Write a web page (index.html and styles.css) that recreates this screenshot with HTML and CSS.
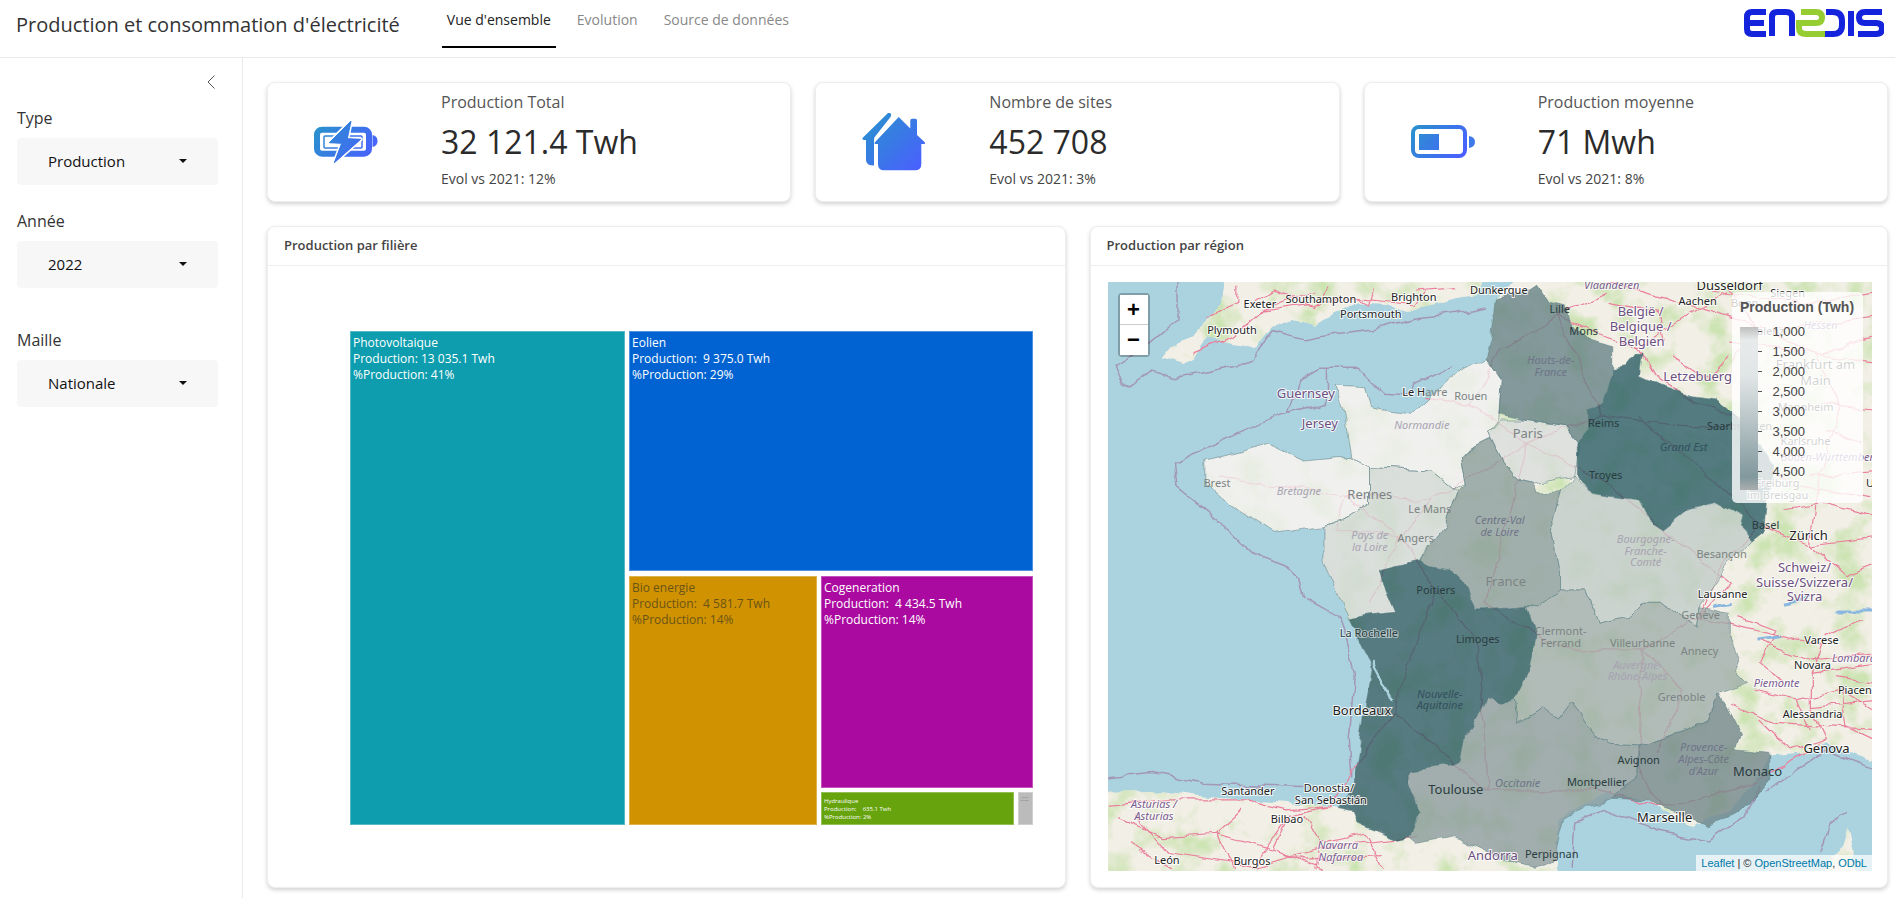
FILE: index.html
```html
<!DOCTYPE html>
<html lang="fr">
<head>
<meta charset="utf-8">
<title>Production et consommation d'électricité</title>
<link rel="stylesheet" href="styles.css">
</head>
<body>
<header class="topbar">
  <div class="app-title">Production et consommation d'électricité</div>
  <nav class="tabs">
    <a class="tab tab-active">Vue d'ensemble</a>
    <a class="tab">Evolution</a>
    <a class="tab">Source de données</a>
  </nav>
  <svg class="logo" width="140" height="30" viewBox="0 0 140 30" role="img" aria-label="Enedis logo">
    <g fill="none" stroke="#1423dc" stroke-width="6" stroke-linejoin="round">
      <path d="M22 4 H8 Q3 4 3 9 V21 Q3 26 8 26 H22 M3 15 H20"/>
      <path d="M28 28 V9 Q28 4 33 4 H42 Q48 4 48 9 V28"/>
      <path d="M81 26 H89 Q98 26 98 17 V13 Q98 4 89 4 H82"/>
      <path d="M107 3 V28"/>
      <path d="M138 4 H121 Q115 4 115 9.500 Q115 15 121 15 H132 Q138 15 138 20.500 Q138 26 132 26 H114"/>
    </g>
    <path d="M57 4 H72 Q78 4 78 9.500 Q78 15 72 15 H55 V20 Q55 26 62 26 H81" fill="none" stroke="#96cd32" stroke-width="6"/>
  </svg>
</header>
<div class="shell">
  <aside class="sidebar">
    <div class="collapse">
      <svg width="8" height="14" viewBox="0 0 8 14"><path d="M7.500 .5 L1 7 L7.500 13.500" fill="none" stroke="#555" stroke-width="1"/></svg>
    </div>
    <div class="filter filter-first">
      <div class="filter-label">Type</div>
      <div class="select"><span>Production</span><i class="caret"></i></div>
    </div>
    <div class="filter">
      <div class="filter-label">Année</div>
      <div class="select"><span>2022</span><i class="caret"></i></div>
    </div>
    <div class="filter filter-spaced">
      <div class="filter-label">Maille</div>
      <div class="select"><span>Nationale</span><i class="caret"></i></div>
    </div>
  </aside>
  <main class="main">
    <section class="kpis">
      <article class="card kpi">
        <div class="kpi-icon">
          <svg width="64" height="44" viewBox="0 0 64 44">
            <defs><linearGradient id="g1" gradientUnits="userSpaceOnUse" x1="8" y1="4" x2="56" y2="42"><stop offset="0" stop-color="#2a90cf"/><stop offset="1" stop-color="#4a5fff"/></linearGradient></defs>
            <rect x="3" y="9.700" width="52" height="24" rx="5" fill="none" stroke="url(#g1)" stroke-width="6"/>
            <rect x="10" y="16" width="38" height="12" rx="1" fill="none" stroke="url(#g1)" stroke-width="1.500"/>
            <path d="M58.500 15 Q63.500 16 63.500 21 Q63.500 26 58.500 27 Z" fill="url(#g1)"/>
            <path d="M37 1 L15.300 22.700 L27.700 23.300 L20.300 42.700 L46.700 19.300 L33.300 18.700 Z" fill="url(#g1)" stroke="#fff" stroke-width="4" stroke-linejoin="round" paint-order="stroke"/>
            <path d="M37 1 L15.300 22.700 L27.700 23.300 L20.300 42.700 L46.700 19.300 L33.300 18.700 Z" fill="url(#g1)" stroke="url(#g1)" stroke-width="1" stroke-linejoin="round"/>
          </svg>
        </div>
        <div class="kpi-text">
          <div class="kpi-label">Production Total</div>
          <div class="kpi-value">32 121.4 Twh</div>
          <div class="kpi-evol">Evol vs 2021: 12%</div>
        </div>
      </article>
      <article class="card kpi">
        <div class="kpi-icon">
          <svg width="64" height="60" viewBox="0 0 64 60">
            <defs><linearGradient id="g2" gradientUnits="userSpaceOnUse" x1="6" y1="6" x2="58" y2="58"><stop offset="0" stop-color="#2a90cf"/><stop offset="1" stop-color="#4a5fff"/></linearGradient></defs>
            <path d="M26 1 L.5 26 Q0 28 2 28 H4 V48 Q4 53.500 12 53.500 V28 Q12 25 13.500 24 L28.500 5 Q30 2.500 28 1 Z" fill="url(#g2)"/>
            <path d="M36.700 5 L48.300 16.500 V8.500 Q48.300 6.700 50 6.700 H53.500 Q55 6.700 55 8.500 V23 L63 30.500 Q63.500 32 62 32 H59.300 V52 Q59.300 58.300 53 58.300 H22 Q16 58.300 16 52 V32 H13.500 Q12 32 12.700 30.500 Z" fill="url(#g2)"/>
          </svg>
        </div>
        <div class="kpi-text">
          <div class="kpi-label">Nombre de sites</div>
          <div class="kpi-value">452 708</div>
          <div class="kpi-evol">Evol vs 2021: 3%</div>
        </div>
      </article>
      <article class="card kpi">
        <div class="kpi-icon">
          <svg width="64" height="34" viewBox="0 0 64 34">
            <defs><linearGradient id="g3" gradientUnits="userSpaceOnUse" x1="6" y1="0" x2="50" y2="34"><stop offset="0" stop-color="#2a90cf"/><stop offset="1" stop-color="#4a5fff"/></linearGradient></defs>
            <rect x="2" y="2" width="52" height="29" rx="6" fill="none" stroke="url(#g3)" stroke-width="4"/>
            <rect x="8" y="9" width="20" height="16" fill="url(#g3)"/>
            <path d="M58 11 Q64 12 64 17 Q64 22 58 23 Z" fill="#3f78e8"/>
          </svg>
        </div>
        <div class="kpi-text">
          <div class="kpi-label">Production moyenne</div>
          <div class="kpi-value">71 Mwh</div>
          <div class="kpi-evol">Evol vs 2021: 8%</div>
        </div>
      </article>
    </section>
    <section class="panels">
      <article class="card panel">
        <h2 class="panel-head">Production par filière</h2>
        <div class="treemap-body">
          <div class="treemap">
            <div class="tile tile-pv">Photovoltaique<br>Production: 13 035.1 Twh<br>%Production: 41%</div>
            <div class="tm-col">
              <div class="tile tile-eol">Eolien<br>Production:  9 375.0 Twh<br>%Production: 29%</div>
              <div class="tm-row">
                <div class="tile tile-bio">Bio energie<br>Production:  4 581.7 Twh<br>%Production: 14%</div>
                <div class="tm-sub">
                  <div class="tile tile-cog">Cogeneration<br>Production:  4 434.5 Twh<br>%Production: 14%</div>
                  <div class="tm-foot">
                    <div class="tile tile-hyd">Hydraulique<br>Production:    635.1 Twh<br>%Production: 2%</div>
                    <div class="tile tile-oth">Autres<br>60 Twh</div>
                  </div>
                </div>
              </div>
            </div>
          </div>
        </div>
      </article>
      <article class="card panel">
        <h2 class="panel-head">Production par région</h2>
        <div class="map-body">
          <div class="map">
            <svg class="map-svg" viewBox="1107 282 765 589" preserveAspectRatio="none">
              <defs>
                <filter id="landfx" filterUnits="userSpaceOnUse" x="1087" y="262" width="805" height="629" color-interpolation-filters="sRGB">
                  <feTurbulence type="fractalNoise" baseFrequency="0.04" numOctaves="3" seed="3" result="n"/>
                  <feDisplacementMap in="SourceGraphic" in2="n" scale="10" xChannelSelector="R" yChannelSelector="G" result="d"/>
                  <feTurbulence type="fractalNoise" baseFrequency="0.03" numOctaves="4" seed="7"/>
                  <feColorMatrix type="matrix" values="0 0 0 0 .8  0 0 0 0 .89  0 0 0 0 .7  2.500 2.500 0 0 -2.400" result="gc"/>
                  <feComposite in="gc" in2="d" operator="in" result="gi"/>
                  <feMerge><feMergeNode in="d"/><feMergeNode in="gi"/></feMerge>
                </filter>
                <filter id="rough" filterUnits="userSpaceOnUse" x="1087" y="262" width="805" height="629" color-interpolation-filters="sRGB">
                  <feTurbulence type="fractalNoise" baseFrequency="0.04" numOctaves="3" seed="3" result="n"/>
                  <feDisplacementMap in="SourceGraphic" in2="n" scale="10" xChannelSelector="R" yChannelSelector="G"/>
                </filter>
              </defs>
              <rect class="sea" x="1107" y="282" width="765" height="589"/>
              <g filter="url(#landfx)">
                <g class="land" transform="translate(1100 270) scale(.507 .3333)">
                  <path d="M250 -30 L770 -30 L745 75 L700 85 L640 110 L600 125 L560 105 L510 100 L470 130 L420 165 L380 150 L340 170 L305 235 L280 225 L210 205 L180 270 L165 285 L130 270 L120 265 L135 235 L180 200 L215 140 L240 80 Z"/>
                  <path d="M860 -30 L1700 -30 L1700 1500 L1523 1470 L1430 1420 L1390 1450 L1320 1460 L1290 1540 L1240 1620 L1170 1670 L1110 1630 L1080 1590 L1000 1570 L950 1610 L905 1650 L895 1900 L-100 1900 L-100 1565 L100 1560 L200 1580 L290 1590 L370 1600 L470 1610 L500 1550 L520 1330 L535 1200 L490 1050 L440 870 L440 770 L340 790 L250 700 L205 640 L205 570 L330 520 L400 570 L470 560 L495 560 L480 420 L460 345 L520 350 L530 410 L610 430 L650 390 L690 320 L760 265 L770 210 L780 90 Z"/>
                  <path d="M1475 1670 L1485 1740 L1490 1900 L1410 1900 L1440 1760 L1465 1730 Z"/>
                </g>
              </g>
              <g filter="url(#rough)">
                <g transform="translate(1100 270) scale(.507 .3333)">
                  <path class="maritime" d="M150 36 L150 150 L100 215 L30 285 Q40 350 60 350 L100 300 L140 325 L220 300 L300 270 L340 185 L400 210 L470 190 L560 170 L620 145 L700 130 L760 110 M390 330 L430 295 L510 295 L560 370 L610 375 L620 340 L690 290 M390 330 L370 430 L445 400 L445 295 M370 430 L350 440 L270 490 L145 580 L150 650 L230 750 L300 850 L360 885 L390 930 L400 980 L470 1040 L500 1210 L490 1410 L495 1520 M-20 1525 L100 1508 L200 1540 L310 1545 L400 1550 M930 1790 L935 1660 L990 1615 L1100 1680 L1200 1710 L1270 1640 L1300 1550 M1310 1565 L1430 1440 L1560 1510 M1470 1630 L1440 1660 L1420 1750"/>
                  <path class="road" d="M180 250 L260 200 L315 125 L380 110 L505 85 L620 105 M315 125 L420 60 M505 85 L530 105 L540 50 M620 105 L640 60 M905 140 L960 180 L1060 230 L1180 115 L1240 60 M905 140 L1000 70 M905 140 L990 435 L1150 470 L1290 470 M1060 230 L1100 330 L1180 400 L1290 470 M1180 115 L1320 180 L1410 255 L1460 410 L1420 610 L1400 825 M1320 180 L1540 140 M1410 255 L1540 200 M1060 440 L1200 620 L1300 760 L1400 825 L1540 800 M1300 760 L1220 900 L1180 1040 M1400 825 L1470 920 L1540 880 M840 520 L729 400 L640 385 M729 400 L785 240 L905 140 M840 520 L990 435 M840 520 L1000 640 L1100 770 L1170 850 L1240 940 L1180 1040 L1070 1140 L910 1140 L760 1000 L840 520 M840 520 L650 690 L480 675 L230 620 M480 675 L590 800 L650 690 M590 800 L660 960 L745 1130 L760 1560 M660 960 L575 1325 L760 1560 L980 1560 L1110 1615 L1300 1540 M1070 1140 L1060 1490 L1110 1615 M1070 1140 L1150 1260 L1100 1450 M480 675 L460 780 L590 800 L530 1000 M575 1325 L450 1610 L365 1620 L290 1590 M1180 1040 L1420 1130 L1400 1210 L1400 1310 L1430 1410 M1400 1210 L1540 1180 M1400 1310 L1540 1290 M1430 1410 L1298 1530 M-20 1610 L130 1590 L290 1590 M130 1750 L300 1790 L370 1640 L450 1610 M130 1750 L70 1640 M300 1790 L480 1720 L620 1700 M370 1640 L340 1740 L440 1802 M230 1690 L400 1770 L560 1760 M1540 1380 L1330 1360 L1240 1300 M1450 1220 L1540 1240 M1290 1110 L1400 1170 L1540 1150 M1240 210 L1540 280 M1200 60 L1400 100 L1540 60 M1000 40 L1180 115 M1420 400 L1540 420 M1400 620 L1540 600 M30 1640 L120 1700 L230 1690 L280 1620 M60 1720 L140 1800 M230 1690 L260 1800 M400 1640 L430 1720 L520 1690 M430 1720 L420 1800 M520 1690 L560 1802 M1290 1260 L1370 1290 L1460 1260 L1540 1330 M1370 1290 L1400 1380 M1300 1350 L1360 1440 L1430 1410 M1460 1260 L1470 1370 L1540 1420 M1260 1040 L1330 1080 L1300 1180 L1350 1240 M1430 1100 L1500 1050 M1240 50 L1290 160 L1250 280 M1130 260 L1200 330 L1240 260 M1000 100 L1100 130 L1110 220 M1290 560 L1360 640 L1520 680 M1430 480 L1500 520 M1340 720 L1430 700 L1530 740 M300 100 L340 60 L420 110 L450 50 M210 140 L270 100 L270 50 M620 60 L700 50"/>
                </g>
              </g>
              <g filter="url(#rough)">
                <g transform="translate(1100 270) scale(.507 .3333)" class="regions">
                  <path fill="#f0f0ef" d="M205 570 L330 520 L400 570 L470 560 L495 560 L530 590 L530 700 L490 740 L440 770 L340 790 L250 700 L205 640 Z"/>
                  <path fill="#f0f0ef" d="M460 345 L520 350 L530 410 L610 430 L650 390 L690 320 L760 265 L790 330 L785 450 L765 490 L770 510 L705 560 L715 650 L690 650 L650 600 L530 590 L495 560 L480 420 Z"/>
                  <path fill="#d3dad9" d="M530 590 L650 600 L690 650 L705 660 L680 770 L635 850 L630 870 L550 900 L560 960 L580 1030 L520 1040 L490 1050 L440 870 L440 770 L490 740 L530 700 Z"/>
                  <path fill="#d8dcdb" d="M765 490 L790 450 L830 450 L920 470 L945 520 L935 620 L905 625 L855 640 L820 630 L790 570 L770 510 Z"/>
                  <path fill="#648085" d="M860 40 L840 60 L780 90 L770 210 L760 265 L790 330 L785 430 L830 450 L920 470 L945 520 L960 480 L960 420 L990 400 L1010 295 L1010 230 L960 210 L930 170 L920 110 L885 100 Z"/>
                  <path fill="#265a63" d="M1060 250 L1040 290 L1010 295 L990 400 L960 420 L960 480 L940 530 L940 620 L965 670 L1060 690 L1080 750 L1110 780 L1160 720 L1215 700 L1265 740 L1260 770 L1285 810 L1310 780 L1315 700 L1330 590 L1310 540 L1250 440 L1210 390 L1170 380 L1110 350 L1065 320 L1070 250 Z"/>
                  <path fill="#8a9c9b" d="M770 510 L790 570 L820 630 L855 640 L860 670 L905 665 L890 760 L905 900 L905 960 L860 1010 L840 1010 L760 1020 L740 1020 L710 930 L690 900 L650 890 L630 870 L635 850 L680 770 L705 660 L715 650 L705 560 Z"/>
                  <path fill="#bfcac7" d="M905 665 L935 620 L965 670 L1060 690 L1080 750 L1110 780 L1160 720 L1215 700 L1265 740 L1260 770 L1285 810 L1240 880 L1220 920 L1180 1010 L1175 1075 L1110 1000 L1070 1000 L1040 1040 L985 1060 L960 960 L905 960 L905 900 L890 760 Z"/>
                  <path fill="#9fadaa" d="M905 960 L960 960 L985 1060 L1040 1040 L1070 1000 L1110 1000 L1175 1075 L1180 1010 L1240 1030 L1240 1090 L1260 1160 L1250 1200 L1275 1240 L1220 1270 L1200 1350 L1120 1400 L1060 1425 L1000 1420 L980 1400 L930 1300 L905 1350 L870 1320 L825 1360 L820 1280 L850 1190 L860 1100 L840 1010 L860 1010 Z"/>
                  <path fill="#8a9b9c" d="M760 1285 L790 1305 L820 1280 L825 1360 L870 1320 L905 1350 L930 1300 L980 1400 L1000 1420 L1060 1425 L1060 1530 L1010 1585 L960 1610 L915 1650 L895 1770 L860 1795 L810 1780 L700 1700 L620 1720 L605 1700 L630 1620 L610 1540 L610 1500 L695 1480 L710 1470 L720 1400 L750 1330 Z"/>
                  <path fill="#718588" d="M1220 1270 L1260 1390 L1250 1440 L1320 1450 L1320 1530 L1280 1600 L1200 1670 L1170 1650 L1110 1620 L1080 1590 L1010 1585 L1060 1530 L1060 1425 L1120 1400 L1200 1350 Z"/>
                  <path fill="#2a5a63" d="M630 870 L650 890 L690 900 L710 930 L740 1020 L760 1020 L840 1010 L860 1100 L850 1190 L820 1280 L790 1305 L760 1285 L750 1330 L720 1400 L710 1470 L695 1480 L610 1500 L610 1540 L630 1620 L605 1700 L590 1710 L510 1660 L500 1620 L470 1610 L500 1550 L520 1330 L535 1200 L490 1050 L520 1040 L580 1030 L560 960 L550 900 Z"/>
                </g>
              </g>
              <g filter="url(#rough)">
                <g transform="translate(1100 270) scale(.507 .3333)">
                  <path class="water" d="M535 1180 L575 1290"/>
                  <path class="lake" d="M1210 1010 L1245 1000 M1290 1110 L1340 1100 M1350 1000 L1400 980 M1450 1020 L1523 1020"/>
                </g>
              </g>
              <g class="labels">
                <text class="city big" x="1729" y="290">Dusseldorf</text>
                <text class="reg" x="1611" y="289">Vlaanderen</text>
                <text class="city" x="1259" y="308">Exeter</text>
                <text class="city" x="1320" y="303">Southampton</text>
                <text class="city" x="1413" y="301">Brighton</text>
                <text class="city" x="1498" y="294">Dunkerque</text>
                <text class="city" x="1370" y="318">Portsmouth</text>
                <text class="city" x="1231" y="334">Plymouth</text>
                <text class="city in" x="1559" y="313">Lille</text>
                <text class="city" x="1697" y="305">Aachen</text>
                <text class="country" x="1640" y="316">België /</text>
                <text class="country" x="1640" y="331">Belgique /</text>
                <text class="country" x="1641" y="346">Belgien</text>
                <text class="city in" x="1583" y="335">Mons</text>
                <text class="country" x="1697" y="381">Letzebuerg</text>
                <text class="country" x="1305" y="398">Guernsey</text>
                <text class="country" x="1319" y="428">Jersey</text>
                <text class="city" x="1424" y="396">Le H<tspan class="faint-span">avre</tspan></text>
                <text class="faint" x="1470" y="400">Rouen</text>
                <text class="regfaint" x="1421" y="429">Normandie</text>
                <text class="faint bigf" x="1527" y="438">Paris</text>
                <text class="regdim" x="1550" y="364">Hauts-de-</text>
                <text class="regdim" x="1550" y="376">France</text>
                <text class="dark" x="1603" y="427">Reims</text>
                <text class="regdark" x="1683" y="451">Grand Est</text>
                <text class="dark" x="1739" y="430">Saarbrücken</text>
                <text class="dark" x="1605" y="479">Troyes</text>
                <text class="faint" x="1216" y="487">Brest</text>
                <text class="regfaint" x="1298" y="495">Bretagne</text>
                <text class="faint bigf" x="1369" y="499">Rennes</text>
                <text class="faint" x="1429" y="513">Le Mans</text>
                <text class="regdim" x="1499" y="524">Centre-Val</text>
                <text class="regdim" x="1499" y="536">de Loire</text>
                <text class="regfaint" x="1369" y="539">Pays de</text>
                <text class="regfaint" x="1369" y="551">la Loire</text>
                <text class="faint" x="1415" y="542">Angers</text>
                <text class="dark" x="1765" y="529">Basel</text>
                <text class="city big" x="1808" y="540">Zürich</text>
                <text class="regfaint" x="1645" y="543">Bourgogne-</text>
                <text class="regfaint" x="1645" y="555">Franche-</text>
                <text class="regfaint" x="1645" y="566">Comté</text>
                <text class="faint" x="1721" y="558">Besançon</text>
                <text class="faint bigf" x="1505" y="586">France</text>
                <text class="country" x="1804" y="572">Schweiz/</text>
                <text class="country" x="1804" y="587">Suisse/Svizzera/</text>
                <text class="country" x="1804" y="601">Svizra</text>
                <text class="dark" x="1435" y="594">Poitiers</text>
                <text class="city" x="1722" y="598">Lausanne</text>
                <text class="faint" x="1700" y="619">Genève</text>
                <text class="dark halo" x="1368" y="637">La Rochelle</text>
                <text class="dark" x="1477" y="643">Limoges</text>
                <text class="faint" x="1560" y="635">Clermont-</text>
                <text class="faint" x="1560" y="647">Ferrand</text>
                <text class="faint" x="1642" y="647">Villeurbanne</text>
                <text class="faint" x="1699" y="655">Annecy</text>
                <text class="city" x="1821" y="644">Varese</text>
                <text class="reg" x="1858" y="662">Lombardia</text>
                <text class="city" x="1812" y="669">Novara</text>
                <text class="regfaint" x="1637" y="669">Auvergne-</text>
                <text class="regfaint" x="1637" y="680">Rhône-Alpes</text>
                <text class="reg" x="1776" y="687">Piemonte</text>
                <text class="city" x="1860" y="694">Piacenza</text>
                <text class="faint" x="1681" y="701">Grenoble</text>
                <text class="regdark" x="1439" y="698">Nouvelle-</text>
                <text class="regdark" x="1439" y="709">Aquitaine</text>
                <text class="city big" x="1361" y="715">Bordeaux</text>
                <text class="city" x="1812" y="718">Alessandria</text>
                <text class="regdim" x="1703" y="751">Provence-</text>
                <text class="regdim" x="1703" y="763">Alpes-Côte</text>
                <text class="regdim" x="1703" y="775">d'Azur</text>
                <text class="city big" x="1826" y="753">Genova</text>
                <text class="dark" x="1638" y="764">Avignon</text>
                <text class="dark bigf" x="1757" y="776">Monaco</text>
                <text class="dark bigf" x="1455" y="794">Toulouse</text>
                <text class="regdim" x="1517" y="787">Occitanie</text>
                <text class="dark" x="1596" y="786">Montpellier</text>
                <text class="city" x="1247" y="795">Santander</text>
                <text class="city" x="1328" y="792">Donostia/</text>
                <text class="city" x="1330" y="804">San Sebastián</text>
                <text class="reg" x="1153" y="808">Asturias /</text>
                <text class="reg" x="1153" y="820">Asturias</text>
                <text class="city big" x="1664" y="822">Marseille</text>
                <text class="city" x="1286" y="823">Bilbao</text>
                <text class="reg" x="1337" y="849">Navarra</text>
                <text class="reg" x="1340" y="861">Nafarroa</text>
                <text class="country" x="1492" y="860">Andorra</text>
                <text class="dark" x="1551" y="858">Perpignan</text>
                <text class="city" x="1166" y="864">León</text>
                <text class="city" x="1251" y="865">Burgos</text>
                <text class="city" x="1787" y="297">Siegen</text>
                <text class="city" x="1744" y="307">Bonn</text>
                <text class="city" x="1763" y="335">Koblenz</text>
                <text class="reg" x="1820" y="329">Hessen</text>
                <text class="city big" x="1815" y="369">Frankfurt am</text>
                <text class="city big" x="1815" y="385">Main</text>
                <text class="city" x="1805" y="411">Mannheim</text>
                <text class="city" x="1805" y="445">Karlsruhe</text>
                <text class="reg" x="1830" y="461">Baden-Württemberg</text>
                <text class="city" x="1777" y="487">Freiburg</text>
                <text class="city" x="1777" y="499">im Breisgau</text>
                <text class="city" x="1876" y="487">Ulm</text>
              </g>
            </svg>
            <div class="zoom-ctl">
              <button class="zoom-btn zoom-in">+</button>
              <button class="zoom-btn">−</button>
            </div>
            <div class="legend">
              <div class="legend-title">Production (Twh)</div>
              <div class="legend-scale">
                <div class="legend-bar"></div>
                <div class="legend-ticks">
                  <div class="tick">1,000</div>
                  <div class="tick">1,500</div>
                  <div class="tick">2,000</div>
                  <div class="tick">2,500</div>
                  <div class="tick">3,000</div>
                  <div class="tick">3,500</div>
                  <div class="tick">4,000</div>
                  <div class="tick">4,500</div>
                </div>
              </div>
            </div>
            <div class="attribution"><a>Leaflet</a> | © <a>OpenStreetMap</a>, <a>ODbL</a></div>
          </div>
        </div>
      </article>
    </section>
  </main>
</div>
</body>
</html>
```
FILE: styles.css
```css
* { box-sizing: border-box; }
html, body { height: 100%; }
body {
  margin: 0;
  height: 100vh;
  overflow: hidden;
  display: flex;
  flex-direction: column;
  background: #fff;
  color: #333;
  font-family: "Open Sans", "Noto Sans", sans-serif;
}
.topbar {
  flex: 0 0 58px;
  display: flex;
  align-items: flex-start;
  padding: 0 11px 0 16px;
  border-bottom: 1px solid #e9e9e9;
}
.app-title {
  font-size: 20px;
  line-height: 50px;
  color: #333;
  white-space: nowrap;
}
.tabs { display: flex; gap: 16px; margin-left: 42px; }
.tab {
  height: 48px;
  padding: 9px 5px 0;
  font-size: 14px;
  line-height: 22px;
  color: #888;
  white-space: nowrap;
}
.tab-active { color: #222; border-bottom: 2px solid #000; }
.logo { margin: 8px 0 0 auto; }

.shell { flex: 1; display: flex; min-height: 0; }
.sidebar {
  flex: 0 0 243px;
  padding: 17px 24px 0 17px;
  border-right: 1px solid #e9e9e9;
}
.collapse { display: flex; justify-content: flex-end; height: 14px; padding-right: 3px; }
.filter { margin-top: 25px; }
.filter-first { margin-top: 18px; }
.filter-spaced { margin-top: 41px; }
.filter-label { font-size: 16px; line-height: 22px; color: #333; margin-bottom: 9px; }
.select {
  height: 47px;
  display: flex;
  align-items: center;
  padding: 0 31px 2px 31px;
  background: #f7f7f7;
  border-radius: 4px;
  font-size: 15px;
  color: #111;
}
.caret {
  margin-left: auto;
  width: 0;
  height: 0;
  border-left: 4px solid transparent;
  border-right: 4px solid transparent;
  border-top: 4px solid #111;
}

.main {
  flex: 1;
  min-width: 0;
  padding: 24px 7px 10px 24px;
  display: flex;
  flex-direction: column;
  gap: 24px;
}
.card {
  background: #fff;
  border: 1px solid #eee;
  border-radius: 8px;
  box-shadow: 0 2px 4px rgba(0, 0, 0, .18);
}
.kpis { display: grid; grid-template-columns: repeat(3, 1fr); gap: 24px; }
.kpi { height: 120px; display: flex; }
.kpi-icon {
  flex: 0 0 173px;
  padding-left: 46px;
  display: flex;
  align-items: center;
}
.kpi-text { padding-top: 8px; }
.kpi-label { font-size: 16px; line-height: 22px; color: #555; }
.kpi-value { margin-top: 7px; font-size: 32px; line-height: 44px; color: #2b2b2b; }
.kpi-evol { margin-top: 5px; font-size: 14px; line-height: 20px; color: #444; }

.panels { flex: 1; min-height: 0; display: grid; grid-template-columns: 1fr 1fr; gap: 24px; }
.panel { display: flex; flex-direction: column; min-height: 0; }
.panel-head {
  margin: 0;
  height: 39px;
  padding: 0 16px;
  border-bottom: 1px solid #eee;
  font-size: 13px;
  font-weight: 600;
  line-height: 36px;
  color: #444;
}
.treemap-body { flex: 1; min-height: 0; padding: 65px 32px 62px 82px; }
.treemap { height: 100%; display: flex; gap: 4px; }
.tile {
  border: 1px solid rgba(255, 255, 255, .3);
  padding: 3px 2px;
  font-size: 12px;
  line-height: 16px;
  color: #fff;
  white-space: pre;
  overflow: hidden;
}
.tile-pv { flex: 0 0 275px; background: #0d9dae; }
.tile-eol { flex: 0 0 240px; background: #0063d1; }
.tile-bio { flex: 0 0 188px; background: #d09200; color: #6a5417; }
.tile-cog { flex: 1; background: #ab0aa0; }
.tile-hyd { flex: 1; background: #66a30d; font-size: 6px; line-height: 8px; padding-top: 4px; }
.tile-oth { flex: 0 0 15px; background: #bbb; color: #777; font-size: 2.500px; line-height: 3px; }
.tm-col { flex: 1; min-width: 0; display: flex; flex-direction: column; gap: 5px; }
.tm-row { flex: 1; min-height: 0; display: flex; gap: 4px; }
.tm-sub { flex: 1; min-width: 0; display: flex; flex-direction: column; gap: 4px; }
.tm-foot { flex: 0 0 31px; display: flex; gap: 4px; }

.map-body { flex: 1; min-height: 0; padding: 16px 15px 16px 17px; display: flex; }
.map { position: relative; flex: 1; overflow: hidden; }
.map-svg { position: absolute; inset: 0; width: 100%; height: 100%; display: block; }
.sea { fill: #aad3df; }
.land { fill: #f2efe6; }
.maritime { fill: none; stroke: #a397b5; stroke-width: 1.500; vector-effect: non-scaling-stroke; }
.road { fill: none; stroke: #ea7f9c; stroke-width: 1.200; vector-effect: non-scaling-stroke; }
.regions path { fill-opacity: .78; stroke: #5b7f85; stroke-opacity: .55; stroke-width: 1; vector-effect: non-scaling-stroke; }
.water { fill: none; stroke: #aad3df; stroke-width: 3; vector-effect: non-scaling-stroke; }
.lake { fill: none; stroke: #8ab7e0; stroke-width: 3; vector-effect: non-scaling-stroke; }
.labels text {
  font-family: "Noto Sans", "Open Sans", sans-serif;
  font-size: 11px;
  text-anchor: middle;
}
.labels .big { font-size: 13px; }
.labels .bigf { font-size: 13px; }
.labels .city { fill: #222; stroke: rgba(255, 255, 255, .85); stroke-width: 2px; paint-order: stroke; }
.labels .country { fill: #6d4f80; font-size: 13px; stroke: rgba(255, 255, 255, .85); stroke-width: 2px; paint-order: stroke; }
.labels .reg { fill: #7b5c90; font-style: italic; stroke: rgba(255, 255, 255, .7); stroke-width: 2px; paint-order: stroke; }
.labels .faint { fill: #7c8483; }
.labels .faint-span { fill: #7c8483; stroke: none; }
.labels .regfaint { fill: #a8a3b2; font-style: italic; }
.labels .regdim { fill: #6f7488; font-style: italic; }
.labels .regdark { fill: #33505e; font-style: italic; }
.labels .dark { fill: #2a3c40; }
.labels .in { fill: #2a3c40; stroke: none; }
.labels .halo { stroke: rgba(255, 255, 255, .5); stroke-width: 2px; paint-order: stroke; }

.zoom-ctl {
  position: absolute;
  top: 11px;
  left: 10px;
  width: 32px;
  border: 2px solid rgba(0, 0, 0, .25);
  border-radius: 4px;
  background-clip: padding-box;
  display: flex;
  flex-direction: column;
}
.zoom-btn {
  height: 30px;
  width: 100%;
  border: 0;
  padding: 0;
  background: #fff;
  color: #000;
  font: bold 22px/30px "Liberation Sans", sans-serif;
}
.zoom-in { border-bottom: 1px solid #ccc; }
.legend {
  position: absolute;
  top: 10px;
  right: 9px;
  width: 131px;
  height: 211px;
  padding: 7px 8px;
  background: rgba(255, 255, 255, .8);
  border-radius: 5px;
  font-family: "Liberation Sans", sans-serif;
  color: #555;
}
.legend-title { font-size: 14px; font-weight: 700; line-height: 16px; white-space: nowrap; }
.legend-scale { display: flex; margin-top: 12px; }
.legend-bar {
  width: 18px;
  height: 163px;
  background: linear-gradient(to bottom, #bcbcbc 0, #e7eaea 8%, #dfe4e5 30%, #b2bfc2 60%, #7c9499 92%, #a9abab 100%);
  opacity: .95;
}
.legend-ticks { width: 47px; margin-top: -6px; }
.tick {
  display: flex;
  justify-content: space-between;
  align-items: center;
  height: 20px;
  font-size: 13px;
  color: #444;
}
.tick::before { content: ""; width: 4px; height: 1px; background: #555; }
.attribution {
  position: absolute;
  right: 0;
  bottom: 0;
  height: 16px;
  padding: 0 5px;
  background: rgba(255, 255, 255, .7);
  font: 11px/16px "Liberation Sans", sans-serif;
  color: #333;
  white-space: nowrap;
}
.attribution a { color: #0078a8; }
```
